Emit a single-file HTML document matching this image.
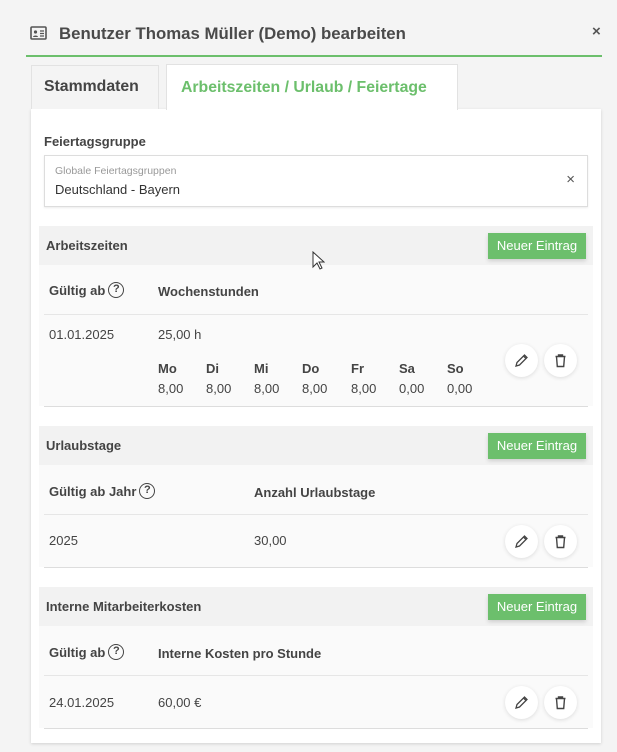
<!DOCTYPE html>
<html><head><meta charset="utf-8"><style>
*{box-sizing:border-box;margin:0;padding:0}
body{width:617px;height:752px;background:#f4f4f4;font-family:"Liberation Sans",sans-serif;color:#444;position:relative;overflow:hidden;font-size:13px}
.a{position:absolute}
.b{font-weight:bold}
.band{position:absolute;left:39px;width:554px;height:39px;background:#f2f2f2}
.band span{position:absolute;left:7px;top:12px;font-weight:bold;font-size:13px;color:#444}
.btn{position:absolute;right:7px;top:7px;width:98px;height:26px;background:#6cbf6c;color:#fff;font-size:13px;text-align:center;line-height:26px;box-shadow:0 2px 4px rgba(0,0,0,.15)}
.tbl{position:absolute;left:39px;width:554px;background:#fafafa}
.line{position:absolute;left:44px;width:544px;height:1px;background:#e6e6e6}
.circ{position:absolute;width:33px;height:33px;border-radius:50%;background:#fff;box-shadow:0 1px 4px rgba(0,0,0,.12)}
.circ svg{position:absolute;left:9px;top:9px}
.q{position:relative;display:inline-block;width:16px;height:16px;border:1.6px solid #444;border-radius:50%;font-size:11px;line-height:13px;text-align:center;font-weight:bold;vertical-align:top;top:-1px;margin-left:3px}
</style></head><body>
<svg class="a" style="left:30px;top:26px" width="17" height="14" viewBox="0 0 17 14"><rect x="1" y="1" width="15" height="12" rx="1" fill="none" stroke="#555" stroke-width="1.6"/><circle cx="5.5" cy="6" r="1.6" fill="#555"/><path d="M3 11c0-2 5-2 5 0z" fill="#555"/><path d="M10 5h4M10 7.5h4M10 10h4" stroke="#555" stroke-width="1.3"/></svg>
<div class="a b" style="left:59px;top:24px;font-size:16.8px;color:#4a4a4a">Benutzer Thomas Müller (Demo) bearbeiten</div>
<div class="a b" style="left:592px;top:23px;font-size:15px;color:#555">×</div>
<div class="a" style="left:26px;top:55px;width:576px;height:2px;background:#6cbf6c"></div>
<div class="a" style="left:31px;top:109px;width:570px;height:634px;background:#fff;box-shadow:0 1px 3px rgba(0,0,0,.15)"></div>
<div class="a b" style="left:31px;top:65px;width:128px;height:44px;background:#f4f4f4;border:1px solid #e2e2e2;border-bottom:none;font-size:15.8px;color:#444;padding:12px 0 0 12px">Stammdaten</div>
<div class="a b" style="left:166px;top:64px;width:292px;height:46px;background:#fff;border:1px solid #e2e2e2;border-bottom:none;font-size:15.8px;color:#6cbf6c;padding:14px 0 0 14px">Arbeitszeiten / Urlaub / Feiertage</div>
<div class="a b" style="left:44px;top:134px;font-size:13px">Feiertagsgruppe</div>
<div class="a" style="left:44px;top:155px;width:544px;height:52px;border:1px solid #ddd;background:#fff;box-shadow:0 1px 2px rgba(0,0,0,.08)">
<div class="a" style="left:10px;top:9px;font-size:10.5px;color:#999">Globale Feiertagsgruppen</div>
<div class="a" style="left:10px;top:26px;font-size:13px;color:#333">Deutschland - Bayern</div>
<div class="a" style="right:12px;top:15px;font-size:15px;color:#555">×</div></div>

<div class="band" style="top:226px"><span>Arbeitszeiten</span><div class="btn">Neuer Eintrag</div></div>
<div class="tbl" style="top:265px;height:141px"></div>
<div class="a b" style="left:49px;top:283px">Gültig ab<span class="q">?</span></div>
<div class="a b" style="left:158px;top:284px">Wochenstunden</div>
<div class="line" style="top:314px"></div>
<div class="a" style="left:49px;top:327px">01.01.2025</div>
<div class="a" style="left:158px;top:327px">25,00 h</div>
<div class="a" style="left:158px;top:359px;line-height:20px"><b>Mo</b><br>8,00</div>
<div class="a" style="left:206px;top:359px;line-height:20px"><b>Di</b><br>8,00</div>
<div class="a" style="left:254px;top:359px;line-height:20px"><b>Mi</b><br>8,00</div>
<div class="a" style="left:302px;top:359px;line-height:20px"><b>Do</b><br>8,00</div>
<div class="a" style="left:351px;top:359px;line-height:20px"><b>Fr</b><br>8,00</div>
<div class="a" style="left:399px;top:359px;line-height:20px"><b>Sa</b><br>0,00</div>
<div class="a" style="left:447px;top:359px;line-height:20px"><b>So</b><br>0,00</div>
<div class="line" style="top:406px;background:#ddd"></div>

<div class="band" style="top:426px"><span>Urlaubstage</span><div class="btn">Neuer Eintrag</div></div>
<div class="tbl" style="top:465px;height:102px"></div>
<div class="a b" style="left:49px;top:484px">Gültig ab Jahr<span class="q">?</span></div>
<div class="a b" style="left:254px;top:485px">Anzahl Urlaubstage</div>
<div class="line" style="top:514px"></div>
<div class="a" style="left:49px;top:533px">2025</div>
<div class="a" style="left:254px;top:533px">30,00</div>
<div class="line" style="top:567px;background:#ddd"></div>

<div class="band" style="top:587px"><span>Interne Mitarbeiterkosten</span><div class="btn">Neuer Eintrag</div></div>
<div class="tbl" style="top:626px;height:102px"></div>
<div class="a b" style="left:49px;top:645px">Gültig ab<span class="q">?</span></div>
<div class="a b" style="left:158px;top:646px">Interne Kosten pro Stunde</div>
<div class="line" style="top:675px"></div>
<div class="a" style="left:49px;top:695px">24.01.2025</div>
<div class="a" style="left:158px;top:695px">60,00 €</div>
<div class="line" style="top:728px;background:#ddd"></div>

<div class="circ" style="left:505px;top:344px"><svg width="15" height="15" viewBox="0 0 15 15"><path d="M2 13l1-3.5 7.5-7.5 2.5 2.5-7.5 7.5z M9.5 3l2.5 2.5" fill="none" stroke="#444" stroke-width="1.3"/></svg></div>
<div class="circ" style="left:544px;top:344px"><svg width="15" height="15" viewBox="0 0 15 15"><path d="M2.5 3.5h10M5.5 3.5V2h4v1.5M3.5 3.5l.8 10h6.4l.8-10" fill="none" stroke="#444" stroke-width="1.4"/></svg></div>
<div class="circ" style="left:505px;top:525px"><svg width="15" height="15" viewBox="0 0 15 15"><path d="M2 13l1-3.5 7.5-7.5 2.5 2.5-7.5 7.5z M9.5 3l2.5 2.5" fill="none" stroke="#444" stroke-width="1.3"/></svg></div>
<div class="circ" style="left:544px;top:525px"><svg width="15" height="15" viewBox="0 0 15 15"><path d="M2.5 3.5h10M5.5 3.5V2h4v1.5M3.5 3.5l.8 10h6.4l.8-10" fill="none" stroke="#444" stroke-width="1.4"/></svg></div>
<div class="circ" style="left:505px;top:686px"><svg width="15" height="15" viewBox="0 0 15 15"><path d="M2 13l1-3.5 7.5-7.5 2.5 2.5-7.5 7.5z M9.5 3l2.5 2.5" fill="none" stroke="#444" stroke-width="1.3"/></svg></div>
<div class="circ" style="left:544px;top:686px"><svg width="15" height="15" viewBox="0 0 15 15"><path d="M2.5 3.5h10M5.5 3.5V2h4v1.5M3.5 3.5l.8 10h6.4l.8-10" fill="none" stroke="#444" stroke-width="1.4"/></svg></div>
<svg class="a" style="left:312px;top:251px" width="13" height="20" viewBox="0 0 13 20"><path d="M1 1v15l4-4 3 6 2-1-3-6h5z" fill="#fff" stroke="#333" stroke-width="1"/></svg>
</body></html>
